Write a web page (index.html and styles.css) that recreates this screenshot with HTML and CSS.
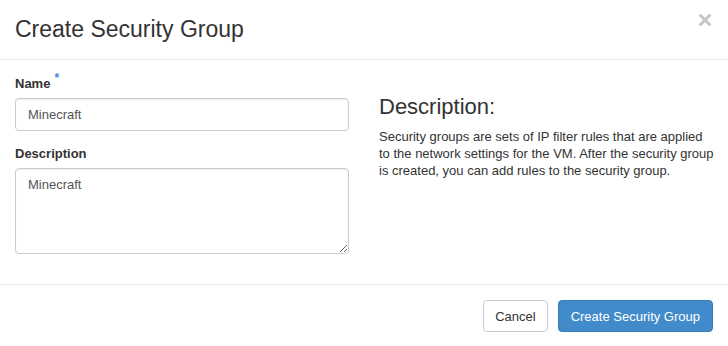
FILE: index.html
```html
<!DOCTYPE html>
<html lang="en">
<head>
    <meta charset="UTF-8">
    <meta name="viewport" content="width=device-width, initial-scale=1.0">
    <title>Create Security Group</title>
    <link rel="stylesheet" href="styles.css">
</head>
<body>
    <div class="modal">
        <div class="modal-header">
            <h4 class="modal-title">Create Security Group</h4>
            <button type="button" class="close" aria-label="Close">
                <svg width="12" height="12" viewBox="0 0 12 12">
                    <path d="M1.5 1.5 L10.5 10.5 M10.5 1.5 L1.5 10.5" stroke="#c6c6c6" stroke-width="3" stroke-linecap="square"/>
                </svg>
            </button>
        </div>

        <div class="modal-body">
            <div class="col">
                <div class="form-group">
                    <label for="name">Name<span class="required">*</span></label>
                    <input type="text" id="name" class="form-control" value="Minecraft">
                </div>
                <div class="form-group">
                    <label for="description">Description</label>
                    <textarea id="description" class="form-control textarea">Minecraft</textarea>
                </div>
            </div>
            <div class="col help">
                <h3>Description:</h3>
                <p>Security groups are sets of IP filter rules that are applied to the network settings for the VM. After the security group is created, you can add rules to the security group.</p>
            </div>
        </div>

        <div class="modal-footer">
            <button type="button" class="btn btn-default">Cancel</button>
            <button type="submit" class="btn btn-primary">Create Security Group</button>
        </div>
    </div>
</body>
</html>
```

FILE: styles.css
```css
/* --- General Setup --- */
:root {
    --text-color: #333;
    --border-color: #e5e5e5;
    --primary-color: #428bca;
    --primary-border: #357ebd;
}

body {
    margin: 0;
    font-family: 'Liberation Sans', Arial, sans-serif;
    font-size: 13px;
    line-height: 1.42857;
    color: var(--text-color);
    background: #fff;
}

.modal {
    width: 728px;
}

/* --- Header --- */
.modal-header {
    display: flex;
    justify-content: space-between;
    align-items: flex-start;
    padding: 15px;
    border-bottom: 1px solid var(--border-color);
}

.modal-title {
    margin: 0;
    font-size: 23px;
    font-weight: 400;
    line-height: 29px;
}

.close {
    padding: 0;
    margin: -1px 2px 0 0;
    border: none;
    background: none;
    line-height: 0;
    cursor: pointer;
}

/* --- Body --- */
.modal-body {
    display: flex;
    gap: 30px;
    padding: 15px;
}

.col {
    flex: 1;
}

.form-group {
    margin-bottom: 14px;
}

.form-group:last-child {
    margin-bottom: 15px;
}

label {
    display: block;
    margin-bottom: 5px;
    font-size: 13px;
    font-weight: 700;
    line-height: 18px;
}

.required {
    display: inline-block;
    vertical-align: top;
    margin: -4px 0 0 4px;
    font-size: 12px;
    line-height: 14px;
    color: var(--primary-color);
}

.form-control {
    display: block;
    width: 100%;
    box-sizing: border-box;
    height: 33px;
    padding: 6px 12px;
    border: 1px solid #ccc;
    border-radius: 4px;
    box-shadow: inset 0 1px 1px rgba(0, 0, 0, 0.075);
    font-family: 'Liberation Sans', Arial, sans-serif;
    font-size: 13px;
    line-height: 19px;
    color: #555;
}

.textarea {
    height: 86px;
    resize: vertical;
}

/* --- Help column --- */
.help h3 {
    margin: 19px 0 8px;
    font-size: 22px;
    font-weight: 400;
    line-height: 26px;
}

.help p {
    margin: 0 -2px 0 0;
    font-size: 13px;
    line-height: 17px;
}

/* --- Footer --- */
.modal-footer {
    display: flex;
    justify-content: flex-end;
    gap: 10px;
    padding: 15px;
    border-top: 1px solid var(--border-color);
}

.btn {
    height: 32px;
    padding: 0 12px;
    border: 1px solid transparent;
    border-radius: 4px;
    font-family: 'Liberation Sans', Arial, sans-serif;
    font-size: 13px;
    cursor: pointer;
}

.btn-default {
    padding: 0 11px;
    background: #fff;
    border-color: #ccc;
    color: var(--text-color);
}

.btn-primary {
    background: var(--primary-color);
    border-color: var(--primary-border);
    color: #fff;
}
```
